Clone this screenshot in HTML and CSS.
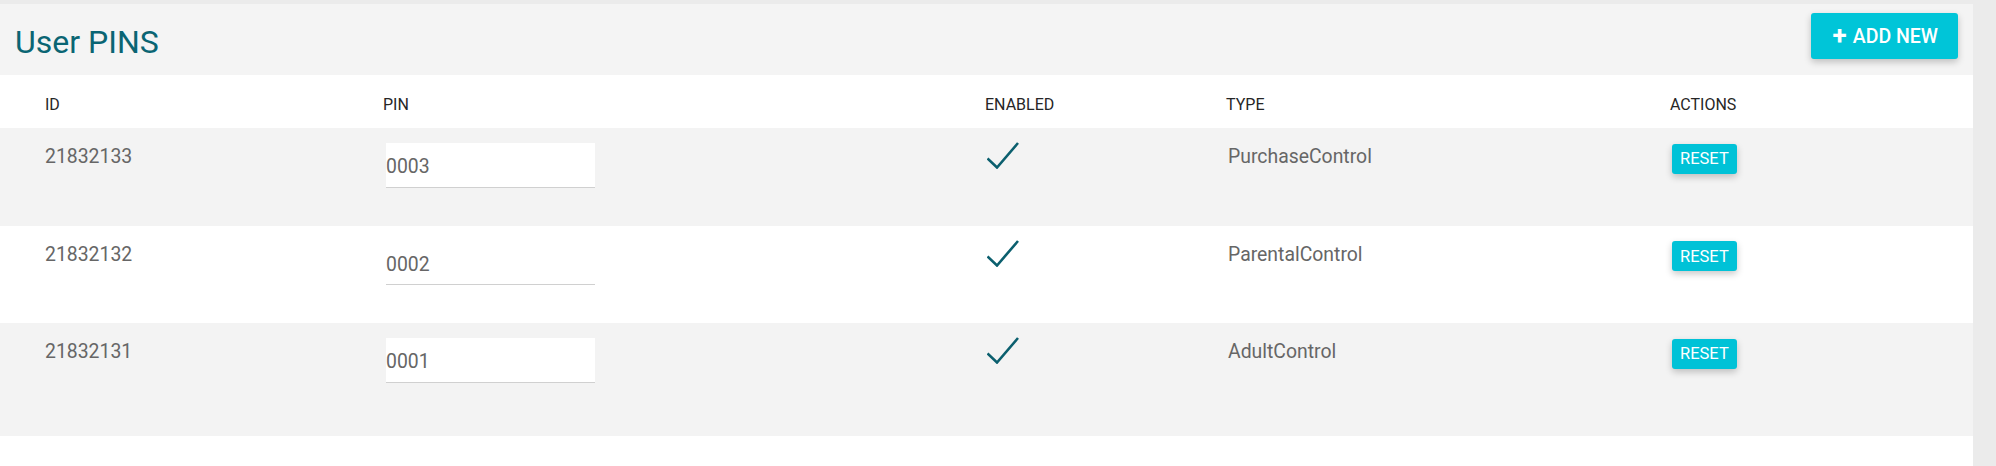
FILE: index.html
```html
<!DOCTYPE html>
<html lang="en">
<head>
<meta charset="utf-8">
<title>User PINS</title>
<link rel="stylesheet" href="styles.css">
</head>
<body>
<main class="page">
  <header class="page-head">
    <h1 class="title">User PINS</h1>
    <button class="btn-add"><span class="plus">+</span>ADD NEW</button>
  </header>
  <div class="table">
    <div class="row head">
      <div class="cell">ID</div>
      <div class="cell">PIN</div>
      <div class="cell">ENABLED</div>
      <div class="cell">TYPE</div>
      <div class="cell">ACTIONS</div>
    </div>
    <div class="row data alt">
      <div class="cell id">21832133</div>
      <div class="cell pin"><input class="pin-input" type="text" value="0003"></div>
      <div class="cell enabled"><svg class="check" viewBox="0 0 32 27" width="32" height="27"><polyline points="0.5,16.5 10,25.5 31,1" fill="none" stroke="#0b5f6e" stroke-width="2.6"/></svg></div>
      <div class="cell type">PurchaseControl</div>
      <div class="cell actions"><button class="btn-reset">RESET</button></div>
    </div>
    <div class="row data">
      <div class="cell id">21832132</div>
      <div class="cell pin"><input class="pin-input" type="text" value="0002"></div>
      <div class="cell enabled"><svg class="check" viewBox="0 0 32 27" width="32" height="27"><polyline points="0.5,16.5 10,25.5 31,1" fill="none" stroke="#0b5f6e" stroke-width="2.6"/></svg></div>
      <div class="cell type">ParentalControl</div>
      <div class="cell actions"><button class="btn-reset">RESET</button></div>
    </div>
    <div class="row data alt last">
      <div class="cell id">21832131</div>
      <div class="cell pin"><input class="pin-input" type="text" value="0001"></div>
      <div class="cell enabled"><svg class="check" viewBox="0 0 32 27" width="32" height="27"><polyline points="0.5,16.5 10,25.5 31,1" fill="none" stroke="#0b5f6e" stroke-width="2.6"/></svg></div>
      <div class="cell type">AdultControl</div>
      <div class="cell actions"><button class="btn-reset">RESET</button></div>
    </div>
  </div>
</main>
</body>
</html>
```
FILE: styles.css
```css
* { box-sizing: border-box; }

html, body {
  margin: 0;
  padding: 0;
  height: 100%;
}

body {
  background: #ebebeb;
  font-family: Roboto, "Liberation Sans", Arial, sans-serif;
  overflow: hidden;
}

.page {
  margin: 4px 23px 0 0;
  background: #ffffff;
  min-height: calc(100% - 4px);
}

.page-head {
  display: flex;
  justify-content: space-between;
  align-items: flex-start;
  height: 71px;
  padding: 0 15px;
  background: #f4f4f4;
}

.title {
  margin: 22px 0 0 0;
  font-size: 32px;
  line-height: 32px;
  font-weight: 400;
  color: #0a6573;
}

.btn-add {
  margin-top: 9px;
  height: 46px;
  padding: 0 20px 0 22px;
  border: none;
  border-radius: 3px;
  background: #00c5d8;
  color: #ffffff;
  font-family: Roboto, "Liberation Sans", Arial, sans-serif;
  font-size: 19.5px;
  font-weight: 500;
  box-shadow: 0 3px 7px rgba(0, 0, 0, 0.22);
  display: flex;
  align-items: center;
}

.plus {
  font-size: 26px;
  font-weight: 700;
  margin-right: 6px;
  line-height: 1;
  position: relative;
  top: -1px;
}

.row {
  display: grid;
  grid-template-columns: 338px 602px 241px 444px 1fr;
  padding-left: 45px;
}

.row.head {
  height: 53px;
  padding-top: 20px;
  font-size: 16px;
  line-height: 20px;
  font-weight: 400;
  color: #262626;
  background: #ffffff;
}

.row.data {
  height: 97.5px;
  align-items: start;
  font-size: 19.4px;
  line-height: 24px;
  color: #666666;
  background: #ffffff;
}

.row.data.alt { background: #f3f3f3; }
.row.data.last { height: 113px; }

.cell.id { padding-top: 17px; }
.cell.type { padding-top: 17px; padding-left: 2px; }
.cell.pin { padding-top: 14.5px; padding-left: 3px; }
.cell.enabled { padding-top: 14px; padding-left: 2px; }
.cell.actions { padding-top: 15.5px; padding-left: 2px; }

.check { display: block; }

.pin-input {
  display: block;
  width: 209px;
  height: 45px;
  padding: 4px 0 0 0;
  margin: 0;
  border: none;
  border-bottom: 1px solid #d0d0d0;
  background: #ffffff;
  font-family: Roboto, "Liberation Sans", Arial, sans-serif;
  font-size: 19.4px;
  color: #666666;
  outline: none;
}

.btn-reset {
  display: block;
  height: 30px;
  padding: 0 8px;
  border: none;
  border-radius: 3px;
  background: #00c2d7;
  color: #ffffff;
  font-family: Roboto, "Liberation Sans", Arial, sans-serif;
  font-size: 16.5px;
  font-weight: 400;
  box-shadow: 0 3px 7px rgba(0, 0, 0, 0.22);
}
```
